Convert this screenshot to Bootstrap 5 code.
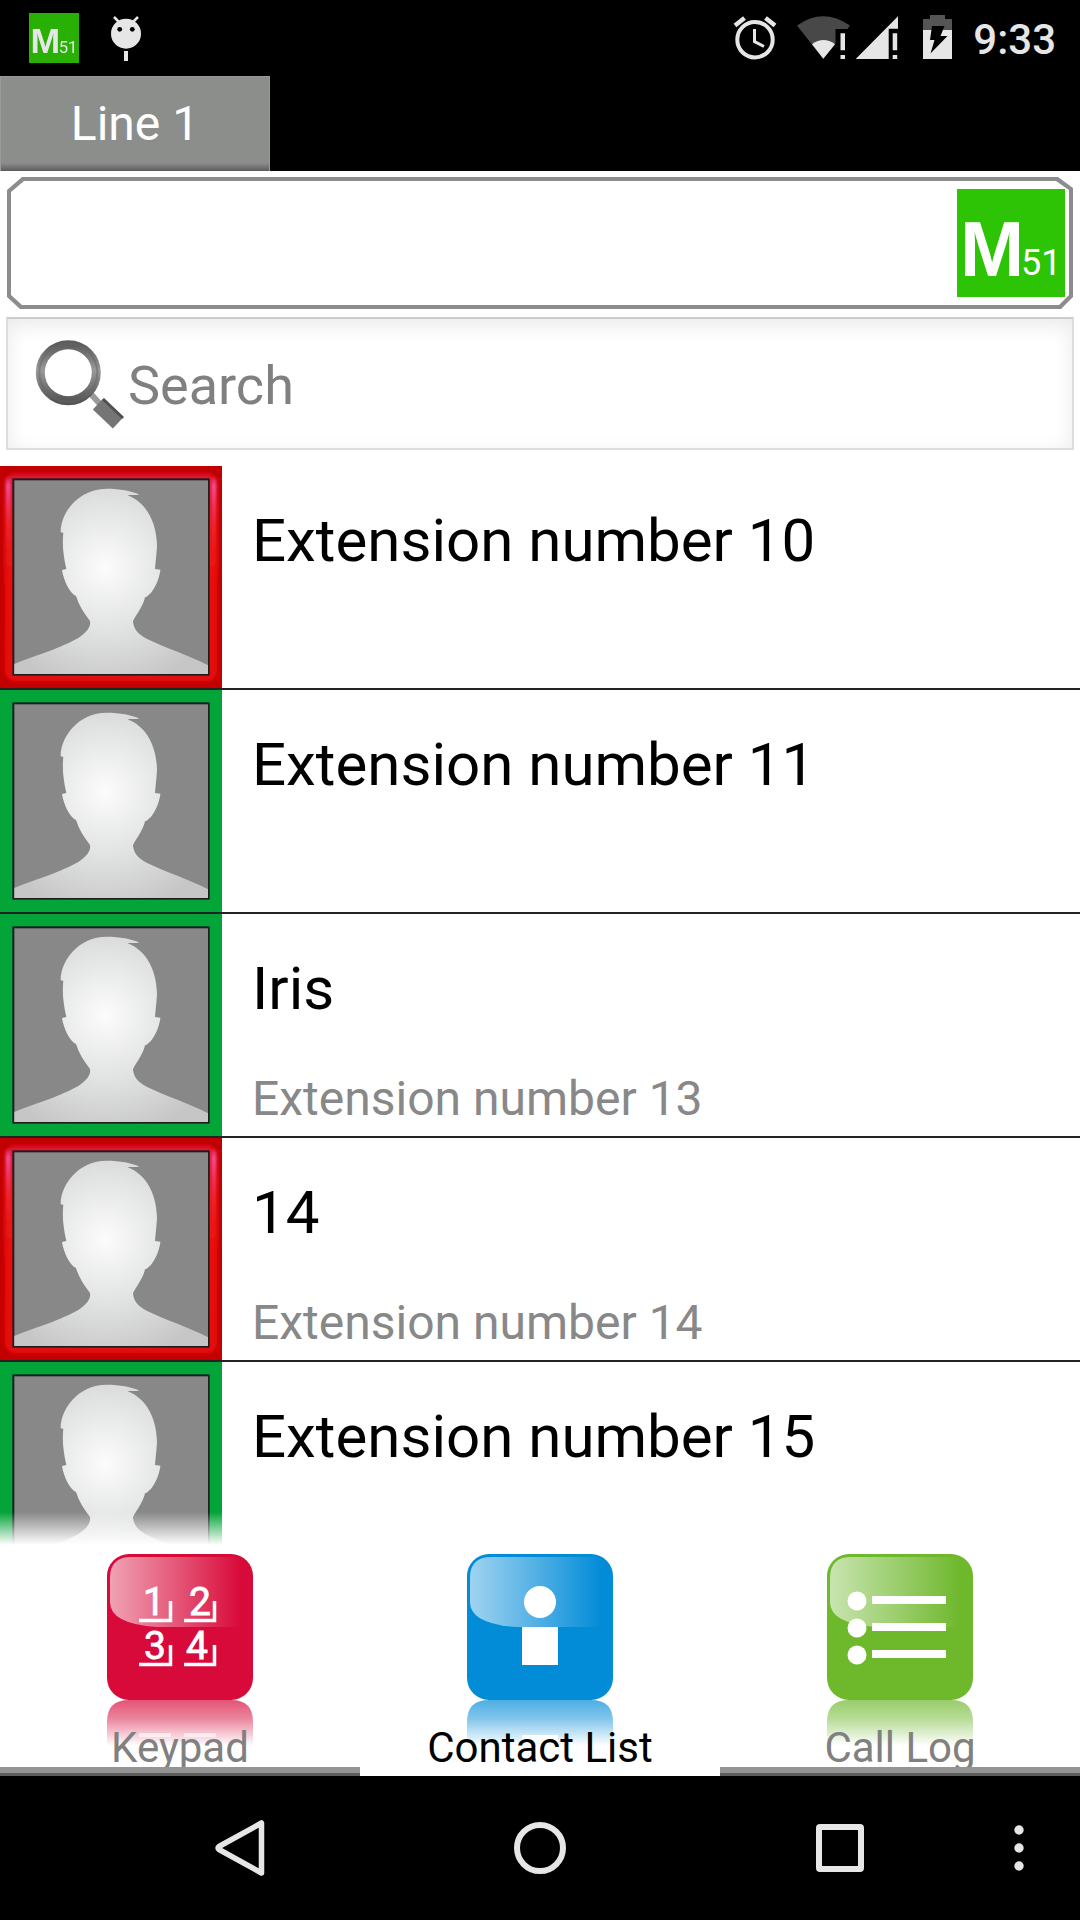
<!DOCTYPE html>
<html lang="en">
<head>
<meta charset="utf-8">
<meta name="viewport" content="width=device-width, initial-scale=1">
<title>Contact List</title>
<link href="https://cdn.jsdelivr.net/npm/bootstrap@5.3.0/dist/css/bootstrap.min.css" rel="stylesheet">
<style>
  body { font-family: Roboto, "Noto Sans", sans-serif; color: #000; background: #fff; }
  svg { display: block; flex: none; }
  .status-bar { height: 76px; padding: 0 24px 0 29px; color: #e6e6e6; }
  .clock { font-size: 42px; line-height: 48px; font-weight: 500; margin-left: 20px; padding-top: 4px; }
  .line-tab { width: 25%; height: 95px; border: 1px solid #9a9a9a; border-bottom: 0; color: #fff; font-size: 48px; line-height: 56px;
    background: linear-gradient(#8c8e8c 0, #8c8e8c 86px, #555 95px); }
  .call-display { margin: 6px 7px 8px; padding: 12px 8px; background: #8c8c8c;
    clip-path: polygon(15px 0, calc(100% - 15px) 0, 100% 11px, 100% calc(100% - 12px), calc(100% - 12px) 100%, 13px 100%, 0 calc(100% - 12px), 0 13px); }
  .call-display::before { content: ""; position: absolute; inset: 4px; background: #fff;
    clip-path: polygon(13px 0, calc(100% - 13px) 0, 100% 9px, 100% calc(100% - 10px), calc(100% - 10px) 100%, 11px 100%, 0 calc(100% - 10px), 0 11px); }
  .search-box { margin: 0 6px 16px; height: 133px; padding: 2px 0 0 26px; border: 2px solid #ddd; border-top-color: #ccc;
    background: #fff; box-shadow: inset 0 6px 20px #e9e9e9; }
  .search-box input { font-size: 54px; line-height: 64px; margin-left: 2px; padding: 2px 0 0; background: transparent; border: 0; }
  .search-box input::placeholder { color: #808080; opacity: 1; }
  .contact-row.list-group-item { height: 224px; border: 0; border-bottom: 2px solid #222; border-radius: 0; padding: 0; color: #000; text-decoration: none; }
  .contact-text { padding: 39px 24px 9px 30px; }
  .contact-name { font-size: 60px; line-height: 72px; }
  .contact-ext { font-size: 48px; line-height: 56px; color: #888; }
  .fade-out { height: 33px; background: linear-gradient(#fff0, #fff); }
  .app-tab { height: 231px; padding-top: 9px; overflow: hidden; color: #808080; font-size: 42px; line-height: 50px; text-decoration: none; }
  .app-tab svg { margin-bottom: -31px; }
  .app-tab::after { content: ""; position: absolute; inset: auto 0 0; height: 9px; background: linear-gradient(#949494 6px, #5c5c5c 6px); }
  .app-tab.active { color: #000; }
  .app-tab.active::after { background: none; }
  .soft-keys { height: 144px; }
  .soft-keys button { border: 0; background: none; padding: 0; flex: 30 0 0; }
  .soft-keys .key-pad, .soft-keys .key-more { flex: 9 0 0; }
  .key-more svg { margin-right: 32px; }
</style>
</head>
<body>
<svg width="0" height="0" class="position-absolute" aria-hidden="true">
  <defs>
    <radialGradient id="skin" gradientUnits="userSpaceOnUse" cx="315" cy="305" r="370">
      <stop offset="0" stop-color="#fcfcfc"/><stop offset=".5" stop-color="#e2e3e3"/><stop offset="1" stop-color="#c6c6c6"/>
    </radialGradient>
    <linearGradient id="redv" x2="0" y2="1"><stop offset="0" stop-color="#e01838"/><stop offset=".25" stop-color="#ee1515"/><stop offset="1" stop-color="#e60808"/></linearGradient>
    <linearGradient id="shine" x2="0" y2="1"><stop offset="0" stop-color="#f0509a" stop-opacity="0"/><stop offset=".12" stop-color="#f0509a"/><stop offset="1" stop-color="#f02020" stop-opacity="0"/></linearGradient>
    <filter id="soft" x="-10%" y="-10%" width="120%" height="120%"><feGaussianBlur stdDeviation="6"/></filter>
    <filter id="soft-strip" x="-150%" y="-10%" width="400%" height="120%"><feGaussianBlur stdDeviation="3"/></filter>
    <symbol id="person" viewBox="0 0 666 666">
      <rect x="37" y="37" width="592" height="592" fill="#1e1e1e"/>
      <rect x="43" y="43" width="581" height="581" fill="#888"/>
      <path fill="url(#skin)" d="M43 594C100 570 165 554 235 516C262 498 273 482 270 465C252 442 236 417 228 390C208 382 190 340 186 312L199 309C190 270 186 235 190 201L182 198C182 140 235 68 320 68C360 68 395 75 418 85C407 89 395 86 383 88C440 110 470 170 471 240C470 265 466 290 465 309L481 311C478 345 455 388 435 394C430 418 413 440 399 465C400 488 415 506 440 518C500 548 570 568 624 598V624H43Z"/>
    </symbol>
    <symbol id="av-red" viewBox="0 0 666 666">
      <rect width="666" height="666" fill="#c20000"/>
      <rect x="14" y="24" width="638" height="622" rx="30" fill="url(#redv)" filter="url(#soft)"/>
      <rect x="18" y="30" width="13" height="240" rx="6" fill="url(#shine)" filter="url(#soft-strip)"/>
      <rect x="635" y="30" width="13" height="240" rx="6" fill="url(#shine)" filter="url(#soft-strip)"/>
      <use href="#person" width="666" height="666"/>
    </symbol>
    <symbol id="av-green" viewBox="0 0 666 666">
      <rect width="666" height="666" fill="#03a438"/>
      <use href="#person" width="666" height="666"/>
    </symbol>
    <linearGradient id="gloss"><stop offset="0" stop-color="#fff" stop-opacity=".62"/><stop offset=".5" stop-color="#fff" stop-opacity=".32"/><stop offset="1" stop-color="#fff" stop-opacity="0"/></linearGradient>
    <linearGradient id="mirror" x2="0" y2="1"><stop offset="0" stop-color="#fff" stop-opacity=".3"/><stop offset=".4" stop-color="#fff" stop-opacity=".5"/><stop offset="1" stop-color="#fff"/></linearGradient>
    <symbol id="tile" viewBox="0 0 146 200">
      <rect width="146" height="146" rx="22" fill="currentColor"/>
      <path d="M3 24Q3 3 24 3H134V73H50Q3 70 3 48Z" fill="url(#gloss)"/>
      <path d="M0 192V168Q0 146 22 146H124Q146 146 146 168V192Z" fill="currentColor"/>
      <rect y="146" width="146" height="46" fill="url(#mirror)"/>
    </symbol>
    <symbol id="m51" viewBox="0 0 108 108">
      <rect width="108" height="108" fill="#2dc405"/>
      <g fill="#fff"><text x="3" y="87" font-size="77" font-weight="700" font-family="Liberation Sans, sans-serif">M</text><text x="64" y="86" font-size="36" font-family="Roboto, sans-serif">51</text></g>
    </symbol>
  </defs>
</svg>

<div class="vh-100 d-flex flex-column overflow-hidden">
  <header class="bg-black flex-shrink-0">
    <div class="status-bar d-flex align-items-center">
      <svg width="50" height="50" opacity=".9" role="img" aria-label="M51"><use href="#m51"/></svg>
      <svg class="ms-4 me-auto" width="46" height="76" viewBox="103 0 46 76" fill="#e6e6e6"><circle cx="126" cy="33.7" r="15"/><path d="M114 17l5 5M138 17l-5 5" stroke="#e6e6e6" stroke-width="2.5"/><circle cx="119.7" cy="29.3" r="2.4" fill="#000"/><circle cx="132.3" cy="29.3" r="2.4" fill="#000"/><path d="M124 51h4v10h-4z"/></svg>
      <svg width="220" height="76" viewBox="733 0 220 76" fill="#e6e6e6">
        <circle cx="755" cy="39.7" r="17.7" fill="none" stroke="#e6e6e6" stroke-width="4"/>
        <path d="M754.500 29v12.500l9.500 5" fill="none" stroke="#e6e6e6" stroke-width="3"/>
        <path d="M735 25.500l9.500-7.500M775 25.500l-9.500-7.500" stroke="#e6e6e6" stroke-width="4.500"/>
        <path d="M823.300 58.700L797 25.500Q823 7 850 25.500L847.500 29H835.500V43.500Z" fill="#484848"/>
        <path d="M823.300 58.700L812 44.200Q823.500 36 835 44.200Z"/>
        <path d="M840.500 33.300h4.500v17h-4.500zM840.500 55h4.500v4h-4.500zM892.700 33.300h4.500v17h-4.500zM892.700 55h4.500v4h-4.500z"/>
        <path d="M855.700 59L898 16.300V28.700H888.700V59Z"/>
        <path d="M930 15h15v4h7v12h-29V19h7z" fill="#555"/><path d="M923 30h29v29h-29z"/>
        <path d="M932 26h12.500l-4 10h7L930.500 53.500l4-13.500h-4.500z" fill="#000"/>
      </svg>
      <span class="clock">9:33</span>
    </div>
    <button type="button" class="line-tab d-block p-0">Line 1</button>
  </header>

  <div class="call-display position-relative d-flex justify-content-end flex-shrink-0">
    <svg class="position-relative" width="108" height="108" role="img" aria-label="M51"><use href="#m51"/></svg>
  </div>

  <div class="search-box d-flex align-items-center flex-shrink-0">
    <svg width="92" height="96" viewBox="34 335 92 96" fill="none">
      <defs><linearGradient id="ring" x2="0" y2="1"><stop offset="0" stop-color="#5c5c5c"/><stop offset=".45" stop-color="#9a9a9a"/><stop offset="1" stop-color="#555"/></linearGradient></defs>
      <path d="M90 391l10 11" stroke="#999" stroke-width="6"/>
      <circle cx="68.300" cy="370.700" r="28" fill="#fff" stroke="url(#ring)" stroke-width="9"/>
      <circle cx="68.300" cy="370.700" r="29" stroke="#666" stroke-width="2" opacity=".5"/>
      <path d="M98 402l20 19" stroke="#757575" stroke-width="15"/><path d="M103 397l20 19" stroke="#505050" stroke-width="3"/>
    </svg>
    <input type="search" class="flex-grow-1 shadow-none" placeholder="Search" aria-label="Search">
  </div>

  <main class="flex-grow-1 position-relative overflow-hidden">
    <div class="list-group rounded-0">
      <a href="#" class="contact-row list-group-item d-flex"><svg width="222" height="222"><use href="#av-red"/></svg><span class="contact-text d-flex flex-column justify-content-between"><span class="contact-name">Extension number 10</span></span></a>
      <a href="#" class="contact-row list-group-item d-flex"><svg width="222" height="222"><use href="#av-green"/></svg><span class="contact-text d-flex flex-column justify-content-between"><span class="contact-name">Extension number 11</span></span></a>
      <a href="#" class="contact-row list-group-item d-flex"><svg width="222" height="222"><use href="#av-green"/></svg><span class="contact-text d-flex flex-column justify-content-between"><span class="contact-name">Iris</span><span class="contact-ext">Extension number 13</span></span></a>
      <a href="#" class="contact-row list-group-item d-flex"><svg width="222" height="222"><use href="#av-red"/></svg><span class="contact-text d-flex flex-column justify-content-between"><span class="contact-name">14</span><span class="contact-ext">Extension number 14</span></span></a>
      <a href="#" class="contact-row list-group-item d-flex"><svg width="222" height="222"><use href="#av-green"/></svg><span class="contact-text d-flex flex-column justify-content-between"><span class="contact-name">Extension number 15</span></span></a>
    </div>
    <div class="fade-out position-absolute bottom-0 start-0 end-0"></div>
  </main>

  <nav class="row g-0 flex-shrink-0">
    <a href="#" class="app-tab col position-relative d-flex flex-column align-items-center">
      <svg width="146" height="200" viewBox="0 0 146 200"><use href="#tile" color="#d80a3a"/>
        <g fill="#fff" stroke="#fff" stroke-width=".8" font-family="Roboto, sans-serif" font-size="39" text-anchor="middle"><text x="47" y="61">1</text><text x="93" y="61">2</text><text x="48" y="105">3</text><text x="90" y="105">4</text></g>
        <path d="M32 66.500H63.500V47M77 66.500H107.500V47M32 110.500H63.500V91M77 110.500H107.500V91" fill="none" stroke="#fff" stroke-width="3.500"/>
        <path d="M32 181h32M77 181h32" stroke="#fff" stroke-width="4" opacity=".6"/></svg>
      <span class="position-relative">Keypad</span>
    </a>
    <a href="#" class="app-tab active col position-relative d-flex flex-column align-items-center" aria-current="page">
      <svg width="146" height="200" viewBox="0 0 146 200"><use href="#tile" color="#028cd8"/>
        <circle cx="73" cy="48" r="16" fill="#fff"/><path d="M55 73h36v38H55zM55 181h36v8H55z" fill="#fff"/></svg>
      <span class="position-relative">Contact List</span>
    </a>
    <a href="#" class="app-tab col position-relative d-flex flex-column align-items-center">
      <svg width="146" height="200" viewBox="0 0 146 200"><use href="#tile" color="#6eb82c"/>
        <g fill="#fff"><circle cx="30" cy="47" r="9.500"/><circle cx="30" cy="74" r="9.500"/><circle cx="30" cy="101" r="9.500"/><path d="M45 42h74v8H45zM45 69h74v8H45zM45 96h74v8H45z"/></g></svg>
      <span class="position-relative">Call Log</span>
    </a>
  </nav>

  <footer class="soft-keys bg-black d-flex flex-shrink-0">
    <span class="key-pad"></span>
    <button type="button" class="d-flex align-items-center justify-content-center" aria-label="Back"><svg width="60" height="60" viewBox="210 1818 60 60"><path d="M261.500 1823V1873L219 1849.500Q217 1848 219 1846.500Z" fill="none" stroke="#e6e6e6" stroke-width="5.500" stroke-linejoin="round"/></svg></button>
    <button type="button" class="d-flex align-items-center justify-content-center" aria-label="Home"><svg width="60" height="60"><circle cx="30" cy="30" r="23" fill="none" stroke="#e6e6e6" stroke-width="6"/></svg></button>
    <button type="button" class="d-flex align-items-center justify-content-center" aria-label="Recent apps"><svg width="60" height="60"><rect x="9" y="9" width="42" height="42" rx="1" fill="none" stroke="#e6e6e6" stroke-width="6"/></svg></button>
    <button type="button" class="key-more d-flex align-items-center justify-content-center" aria-label="More"><svg width="12" height="60" fill="#e6e6e6"><circle cx="6" cy="12" r="4.700"/><circle cx="6" cy="30" r="4.700"/><circle cx="6" cy="48" r="4.700"/></svg></button>
  </footer>
</div>
<script src="https://cdn.jsdelivr.net/npm/bootstrap@5.3.0/dist/js/bootstrap.bundle.min.js"></script>
</body>
</html>
